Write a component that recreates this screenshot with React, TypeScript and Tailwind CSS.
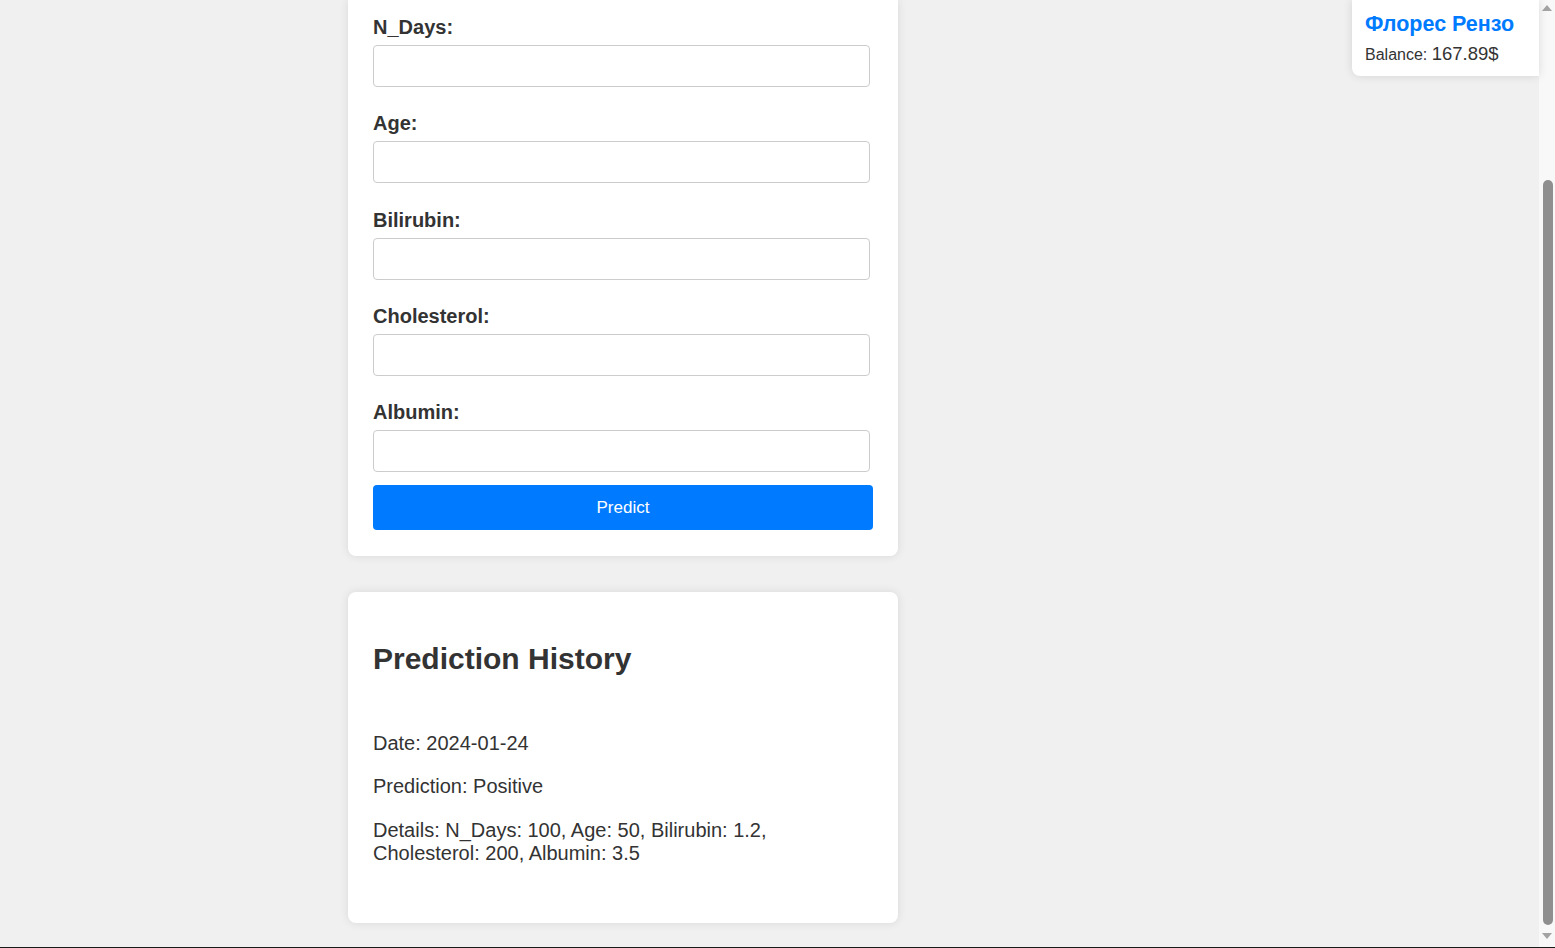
const fields = ["N_Days", "Age", "Bilirubin", "Cholesterol", "Albumin"];

function UserBadge() {
  return (
    <div className="absolute right-0 top-0 flex h-[76px] w-[187px] flex-col rounded-bl-lg bg-white px-[13px] shadow-[0_0_10px_rgba(0,0,0,0.12)]">
      <div className="mt-[12px] text-[21.5px] font-bold leading-[24px] text-[#007bff]">Флорес Рензо</div>
      <div className="mt-[7px] leading-[22px] text-[#333]">
        <span className="text-[16px]">Balance: </span>
        <span className="text-[18.5px]">167.89$</span>
      </div>
    </div>
  );
}

function Scrollbar() {
  return (
    <aside className="flex w-[16px] flex-col bg-[#f8f8f8]">
      <div className="flex h-[16px] items-center justify-center">
        <div className="h-0 w-0 border-x-[5px] border-b-[6px] border-x-transparent border-b-[#a3a3a3]" />
      </div>
      <div className="h-[164px]" />
      <div className="ml-[4px] h-[745px] w-[10px] rounded-full bg-[#8f8f8f]" />
      <div className="flex flex-1 items-center justify-center">
        <div className="h-0 w-0 border-x-[5px] border-t-[6px] border-x-transparent border-t-[#a3a3a3]" />
      </div>
    </aside>
  );
}

export default function App() {
  return (
    <div className="flex h-[948px] w-full overflow-hidden border-b border-[#1a1a1a] bg-[#f0f0f0] font-['Liberation_Sans',Arial,sans-serif] text-[#333]">
      <main className="relative flex-1">
        <div className="ml-[348px] flex w-[550px] flex-col">
          {/* Prediction form */}
          <form className="flex flex-col rounded-b-lg bg-white px-[25px] pb-[26px] pt-[16px] shadow-[0_0_10px_rgba(0,0,0,0.1)]">
            {fields.map((f, i) => (
              <div
                key={f}
                className={i === 0 ? "flex flex-col" : i === 2 ? "mt-[26px] flex flex-col" : "mt-[25px] flex flex-col"}
              >
                <label className="mb-[6px] text-[20px] font-bold leading-[23px]">{f}:</label>
                <input
                  type="text"
                  className="h-[42px] w-[497px] rounded border border-[#ccc] bg-white px-[10px] text-[16px] outline-none"
                />
              </div>
            ))}
            <button
              type="button"
              className="mt-[13px] h-[45px] w-[500px] rounded bg-[#007bff] text-[17px] text-white"
            >
              Predict
            </button>
          </form>

          {/* History */}
          <section className="mt-[36px] flex flex-col rounded-lg bg-white px-[25px] pb-[58px] pt-[25px] shadow-[0_0_10px_rgba(0,0,0,0.1)]">
            <h2 className="mt-[25px] text-[30px] font-bold leading-[34px]">Prediction History</h2>
            <div className="mt-[56px] flex flex-col text-[20px] leading-[23px]">
              <p>Date: 2024-01-24</p>
              <p className="mt-[20px]">Prediction: Positive</p>
              <p className="mt-[21px]">Details: N_Days: 100, Age: 50, Bilirubin: 1.2, Cholesterol: 200, Albumin: 3.5</p>
            </div>
          </section>
        </div>
        <UserBadge />
      </main>
      <Scrollbar />
    </div>
  );
}
